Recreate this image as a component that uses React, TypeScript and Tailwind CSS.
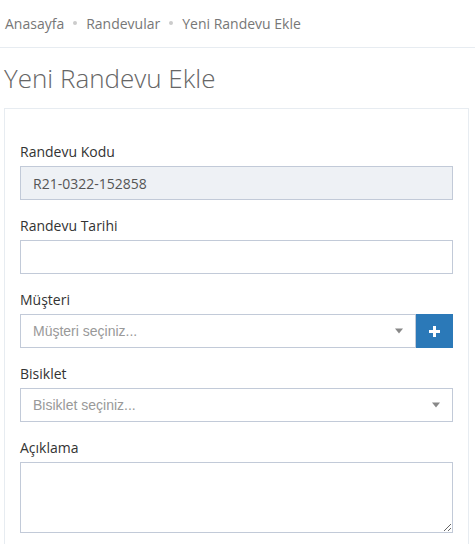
import React from "react";

const Caret = () => (
  <span className="absolute right-[12px] top-1/2 -translate-y-1/2 w-0 h-0 border-l-[4px] border-r-[4px] border-t-[5px] border-l-transparent border-r-transparent border-t-[#888]" />
);

export default function App() {
  return (
    <div className="w-[475px] h-[544px] bg-white overflow-hidden" style={{ fontFamily: '"Open Sans", sans-serif' }}>
      <div className="h-[48px] border-b border-[#e7ecf1] flex items-center pl-[5px] pb-[11px] pt-[10px] text-[14px] text-[#777]">
        <span>Anasayfa</span>
        <span className="mx-[9px] w-[4px] h-[4px] rounded-full bg-[#ccc]" />
        <span>Randevular</span>
        <span className="mx-[9px] w-[4px] h-[4px] rounded-full bg-[#ccc]" />
        <span>Yeni Randevu Ekle</span>
      </div>
      <h1 className="pl-[4px] mt-[13px] text-[26px] leading-[34px] font-light text-[#666]">Yeni Randevu Ekle</h1>
      <div className="mt-[13px] ml-[4px] w-[465px] border border-[#e7ecf1] px-[15px] pt-[33px]">
        <div className="flex flex-col">
          <label className="text-[14px] leading-[20px] text-[#333] mb-[4px]">Randevu Kodu</label>
          <div className="h-[34px] border border-[#c2cad8] bg-[#eef1f5] px-[12px] flex items-center text-[14px] text-[#555]">
            R21-0322-152858
          </div>
        </div>
        <div className="flex flex-col mt-[16px]">
          <label className="text-[14px] leading-[20px] text-[#333] mb-[4px]">Randevu Tarihi</label>
          <input className="h-[34px] border border-[#c2cad8] bg-white px-[12px] outline-none" />
        </div>
        <div className="flex flex-col mt-[16px]">
          <label className="text-[14px] leading-[20px] text-[#333] mb-[4px]">Müşteri</label>
          <div className="flex h-[34px]">
            <div className="relative flex-1 border border-[#c2cad8] flex items-center px-[12px] text-[14px] text-[#999]" style={{ fontFamily: '"Liberation Sans", Arial, sans-serif' }}>
              Müşteri seçiniz...
              <Caret />
            </div>
            <button className="w-[37px] bg-[#2b79b8] flex items-center justify-center">
              <svg width="11" height="11" viewBox="0 0 11 11">
                <rect x="4" y="0" width="3" height="11" fill="white" />
                <rect x="0" y="4" width="11" height="3" fill="white" />
              </svg>
            </button>
          </div>
        </div>
        <div className="flex flex-col mt-[16px]">
          <label className="text-[14px] leading-[20px] text-[#333] mb-[4px]">Bisiklet</label>
          <div className="relative h-[34px] border border-[#c2cad8] flex items-center px-[12px] text-[14px] text-[#999]" style={{ fontFamily: '"Liberation Sans", Arial, sans-serif' }}>
            Bisiklet seçiniz...
            <Caret />
          </div>
        </div>
        <div className="flex flex-col mt-[16px]">
          <label className="text-[14px] leading-[20px] text-[#333] mb-[4px]">Açıklama</label>
          <textarea className="h-[71px] border border-[#c2cad8] bg-white px-[12px] outline-none block" />
        </div>
        <div className="h-[20px]" />
      </div>
    </div>
  );
}
